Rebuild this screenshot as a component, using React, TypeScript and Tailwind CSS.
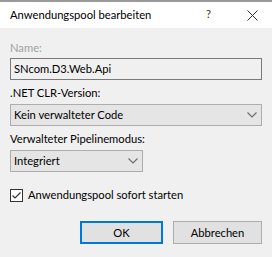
import React from "react";

function Chevron() {
  return (
    <svg width="10" height="6" viewBox="0 0 10 6" className="absolute right-[4px] top-1/2 -translate-y-1/2">
      <path d="M0.5 0.5 L5 5 L9.5 0.5" fill="none" stroke="#6a6a6a" strokeWidth="1.1" />
    </svg>
  );
}

export default function App() {
  const font = { fontFamily: 'Lato, "Noto Sans", "Liberation Sans", sans-serif' };
  return (
    <div className="w-[272px] h-[257px] bg-[#f0f0f0] border-t-2 border-[#9a9a9a] text-[11.2px] text-black flex flex-col" style={font}>
      <div className="h-[26px] bg-white flex items-center pl-[10px] relative">
        <span className="leading-[16px]">Anwendungspool bearbeiten</span>
        <span className="absolute left-[206px] top-[4px] leading-[16px] text-[#333]">?</span>
        <svg width="11" height="11" viewBox="0 0 11 11" className="absolute left-[247px] top-[8px]">
          <path d="M0.5 0.5 L10.5 10.5 M10.5 0.5 L0.5 10.5" stroke="#333" strokeWidth="1" />
        </svg>
      </div>
      <div className="flex flex-col px-[10px] pt-[12px]">
        <div className="leading-[16px] text-[#a0a0a0]">Name:</div>
        <div className="mt-[2px] h-[22px] border border-[#7a7a7a] bg-[#f0f0f0] flex items-center pl-[3px] leading-[16px]">
          SNcom.D3.Web.Api
        </div>
        <div className="mt-[5px] leading-[16px]">.NET CLR-Version:</div>
        <div className="mt-[3px] h-[22px] border border-[#adadad] bg-[#e5e5e5] flex items-center pl-[3px] leading-[16px] relative">
          Kein verwalteter Code
          <Chevron />
        </div>
        <div className="mt-[5px] leading-[16px]">Verwalteter Pipelinemodus:</div>
        <div className="mt-[3px] w-[133px] h-[22px] border border-[#adadad] bg-[#e5e5e5] flex items-center pl-[3px] leading-[16px] relative">
          Integriert
          <Chevron />
        </div>
        <div className="mt-[16px] flex items-center h-[14px]">
          <div className="w-[13px] h-[13px] border border-[#333] bg-white flex items-center justify-center">
            <svg width="11" height="11" viewBox="0 0 11 11">
              <path d="M1.5 5.5 L4 8 L9.5 2.5" fill="none" stroke="#333" strokeWidth="1.2" />
            </svg>
          </div>
          <span className="ml-[5px] leading-[16px]">Anwendungspool sofort starten</span>
        </div>
        <div className="mt-[19px] flex justify-end gap-[10px]">
          <div className="w-[83px] h-[23px] border-2 border-[#0078d7] bg-[#e1e1e1] flex items-center justify-center leading-[16px]">
            OK
          </div>
          <div className="w-[89px] h-[23px] border border-[#adadad] bg-[#e1e1e1] flex items-center justify-center leading-[16px]">
            Abbrechen
          </div>
        </div>
      </div>
    </div>
  );
}
